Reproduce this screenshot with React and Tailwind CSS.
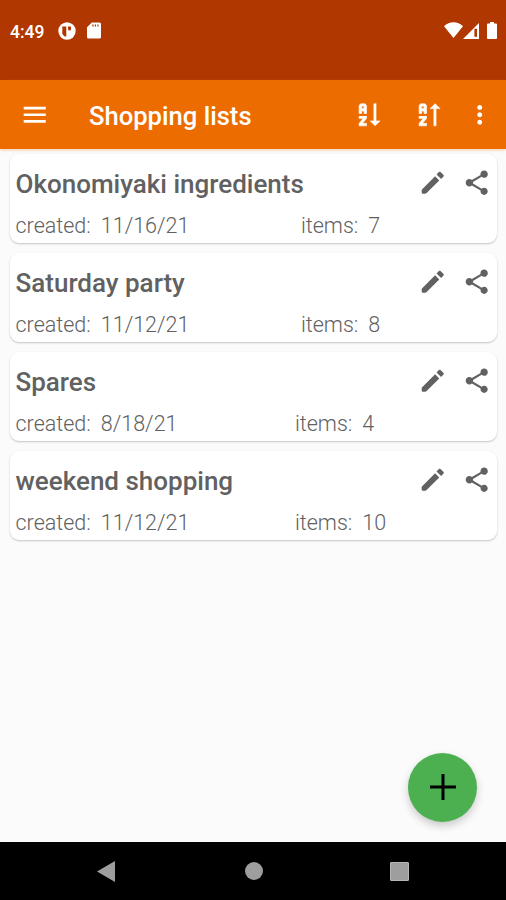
const lists = [
  { name: 'Okonomiyaki ingredients', created: '11/16/21', items: 7, column: 'w-[285.500px]' },
  { name: 'Saturday party', created: '11/12/21', items: 8, column: 'w-[285.500px]' },
  { name: 'Spares', created: '8/18/21', items: 4, column: 'w-[279.500px]' },
  { name: 'weekend shopping', created: '11/12/21', items: 10, column: 'w-[279.500px]' }
]

const AZ =
  'M11 13V15L7.67 19H11V21H5V19L8.33 15H5V13M9 3H7C5.9 3 5 3.9 5 5V11H7V9H9V11H11V5C11 3.9 10.11 3 9 3M9 7H7V5H9Z'

const icons = {
  menu: 'M3 18.500h18v-2.200H3v2.200zm0-5.400h18v-2.200H3v2.200zm0-7.600v2.200h18V5.500H3z',
  sortDown: 'M19 17H22L18 21L14 17H17V3H19' + AZ,
  sortUp: 'M19 7H22L18 3L14 7H17V21H19' + AZ,
  more: 'M12 8c1.1 0 2-.9 2-2s-.9-2-2-2-2 .9-2 2 .9 2 2 2zm0 2c-1.1 0-2 .9-2 2s.9 2 2 2 2-.9 2-2-.9-2-2-2zm0 6c-1.1 0-2 .9-2 2s.9 2 2 2 2-.9 2-2-.9-2-2-2z',
  edit: 'M3 18.200c0-.4.15-.75.4-1L13.900 6.700l3.400 3.400L6.800 20.600c-.25.25-.6.4-1 .4H4a1 1 0 0 1-1-1zM20.800 7c.3-.4.3-.9 0-1.300l-2.500-2.500c-.4-.3-.9-.3-1.300 0l-1.900 2 3.700 3.700z',
  share: 'M18 16.08c-.76 0-1.44.3-1.96.77L8.91 12.7c.05-.23.09-.46.09-.7s-.04-.47-.09-.7l7.05-4.11c.54.5 1.25.81 2.04.81 1.66 0 3-1.34 3-3s-1.34-3-3-3-3 1.34-3 3c0 .24.04.47.09.7L8.04 9.81C7.5 9.31 6.79 9 6 9c-1.66 0-3 1.34-3 3s1.34 3 3 3c.79 0 1.5-.31 2.04-.81l7.12 4.16c-.05.21-.08.43-.08.65 0 1.61 1.31 2.92 2.92 2.92 1.61 0 2.92-1.31 2.92-2.92s-1.31-2.92-2.92-2.92z'
}

function Icon({ name, className = '' }) {
  return (
    <svg viewBox="0 0 24 24" fill="currentColor" className={`size-[29.5px] shrink-0 ${className}`}>
      <path d={icons[name]} />
    </svg>
  )
}

function StatusBar() {
  return (
    <div className="flex h-20 items-start bg-[#b03700] pt-[21px] pl-[10px] pr-[8px] text-white">
      <span className="w-[48px] pt-px text-[17.5px] leading-5 font-medium">4:49</span>
      <svg viewBox="0 0 18 18" className="mt-[1px] size-[18px]">
        <circle cx="9" cy="9" r="8.7" fill="#fff" />
        <path d="M4.300 4.500h4v10h-1.600a6.500 6.500 0 0 1-2.400-2.800z" fill="#b03700" />
        <path d="M10 4.500h3v2.500a1.500 1.500 0 0 1-3 0z" fill="#b03700" />
      </svg>
      <svg viewBox="0 0 14 17" className="ml-[11px] mt-[1px] h-[17px] w-[14px]">
        <path d="M4.800.5H12.500a1.500 1.500 0 0 1 1.500 1.500V15a1.500 1.500 0 0 1-1.500 1.500H1.500A1.500 1.500 0 0 1 0 15V5.300z" fill="#fff" />
        <path d="M5.300 2.600h1.200v1.800H5.300zM7.800 2.600h1.200v1.800H7.800zM10.300 2.600h1.200v1.800h-1.200z" fill="#b03700" />
      </svg>
      <div className="ml-auto flex items-start">
        <svg viewBox="0 0 19 16" className="mt-[1px] h-4 w-[19px]">
          <path d="M9.500 16 0 4.200C2.800 1.600 6 .3 9.500.3s6.700 1.300 9.500 3.900z" fill="#fff" />
        </svg>
        <svg viewBox="0 0 16 16" className="mt-[2px] h-4 w-4">
          <path d="M16 0v16H0z" fill="#fff" />
          <path d="M11.400 5.800h2.600v8h-2.600z" fill="#b03700" />
        </svg>
        <svg viewBox="0 0 10 17" className="mr-px ml-[8px] mt-[1px] h-[17px] w-[10px]">
          <path d="M3 0h4v1.600h2a1 1 0 0 1 1 1V16a1 1 0 0 1-1 1H1a1 1 0 0 1-1-1V2.600a1 1 0 0 1 1-1h2z" fill="#fff" />
        </svg>
      </div>
    </div>
  )
}

function AppBar() {
  return (
    <div className="z-10 flex h-[69px] items-center bg-[#ed6c00] pl-[20px] pr-[12px] text-white shadow-[0_1px_3px_rgba(237,108,0,0.35)]">
      <Icon name="menu" />
      <h1 className="ml-[39.500px] pt-[2px] text-[25.600px] leading-8 font-medium">Shopping lists</h1>
      <div className="ml-auto flex items-center">
        <Icon name="sortDown" className="stroke-current stroke-[0.5]" />
        <Icon name="sortUp" className="ml-[30.500px] stroke-current stroke-[0.5]" />
        <Icon name="more" className="ml-[22px]" />
      </div>
    </div>
  )
}

function ListCard({ list }) {
  return (
    <div className="h-[89px] rounded-[9px] bg-white pl-[5.500px] pr-[5.500px] pt-[13px] text-[#616161] shadow-[0_1px_2px_rgba(0,0,0,0.22)]">
      <div className="flex h-[32px] items-center">
        <h2 className="pt-[2px] text-[26px] leading-8 font-medium">{list.name}</h2>
        <Icon name="edit" className="ml-auto" />
        <Icon name="share" className="ml-[15px]" />
      </div>
      <div className="mt-[13px] flex text-[21.500px] leading-[28px] font-light">
        <div className={`flex gap-[10px] ${list.column}`}>
          <span>created:</span>
          <span>{list.created}</span>
        </div>
        <div className="flex gap-[10px]">
          <span>items:</span>
          <span>{list.items}</span>
        </div>
      </div>
    </div>
  )
}

export default function App() {
  return (
    <div className="flex h-[900px] w-[506px] flex-col overflow-hidden bg-[#fbfbfb] font-[Roboto,sans-serif]">
      <StatusBar />
      <AppBar />
      <div className="relative flex flex-1 flex-col gap-[10px] pl-[10px] pr-[9px] pt-[5px]">
        {lists.map(list => (
          <ListCard key={list.name} list={list} />
        ))}
        <button className="absolute right-[29px] bottom-[20px] flex size-[69px] items-center justify-center rounded-full bg-[#4caf50] text-black shadow-[0_4px_8px_rgba(0,0,0,0.2)]">
          <svg viewBox="0 0 26 26" className="mb-px size-[26px]" fill="currentColor">
            <path d="M0 11.500h11.500V0h3v11.500H26v3H14.500V26h-3V14.500H0z" />
          </svg>
        </button>
      </div>

      {/* System navigation */}
      <div className="flex h-[58px] items-center bg-black pl-[97px] pr-[97px] text-[#9e9e9e]">
        <svg viewBox="0 0 18 21" className="h-[21px] w-[18px]" fill="currentColor">
          <path d="M18 0v21L0 10.500z" />
        </svg>
        <div className="ml-[130px] size-[18px] rounded-full bg-[#9e9e9e]" />
        <div className="ml-auto size-[19px] rounded-[1px] border border-[#b5b5b5] bg-[#9e9e9e]" />
      </div>
    </div>
  )
}
